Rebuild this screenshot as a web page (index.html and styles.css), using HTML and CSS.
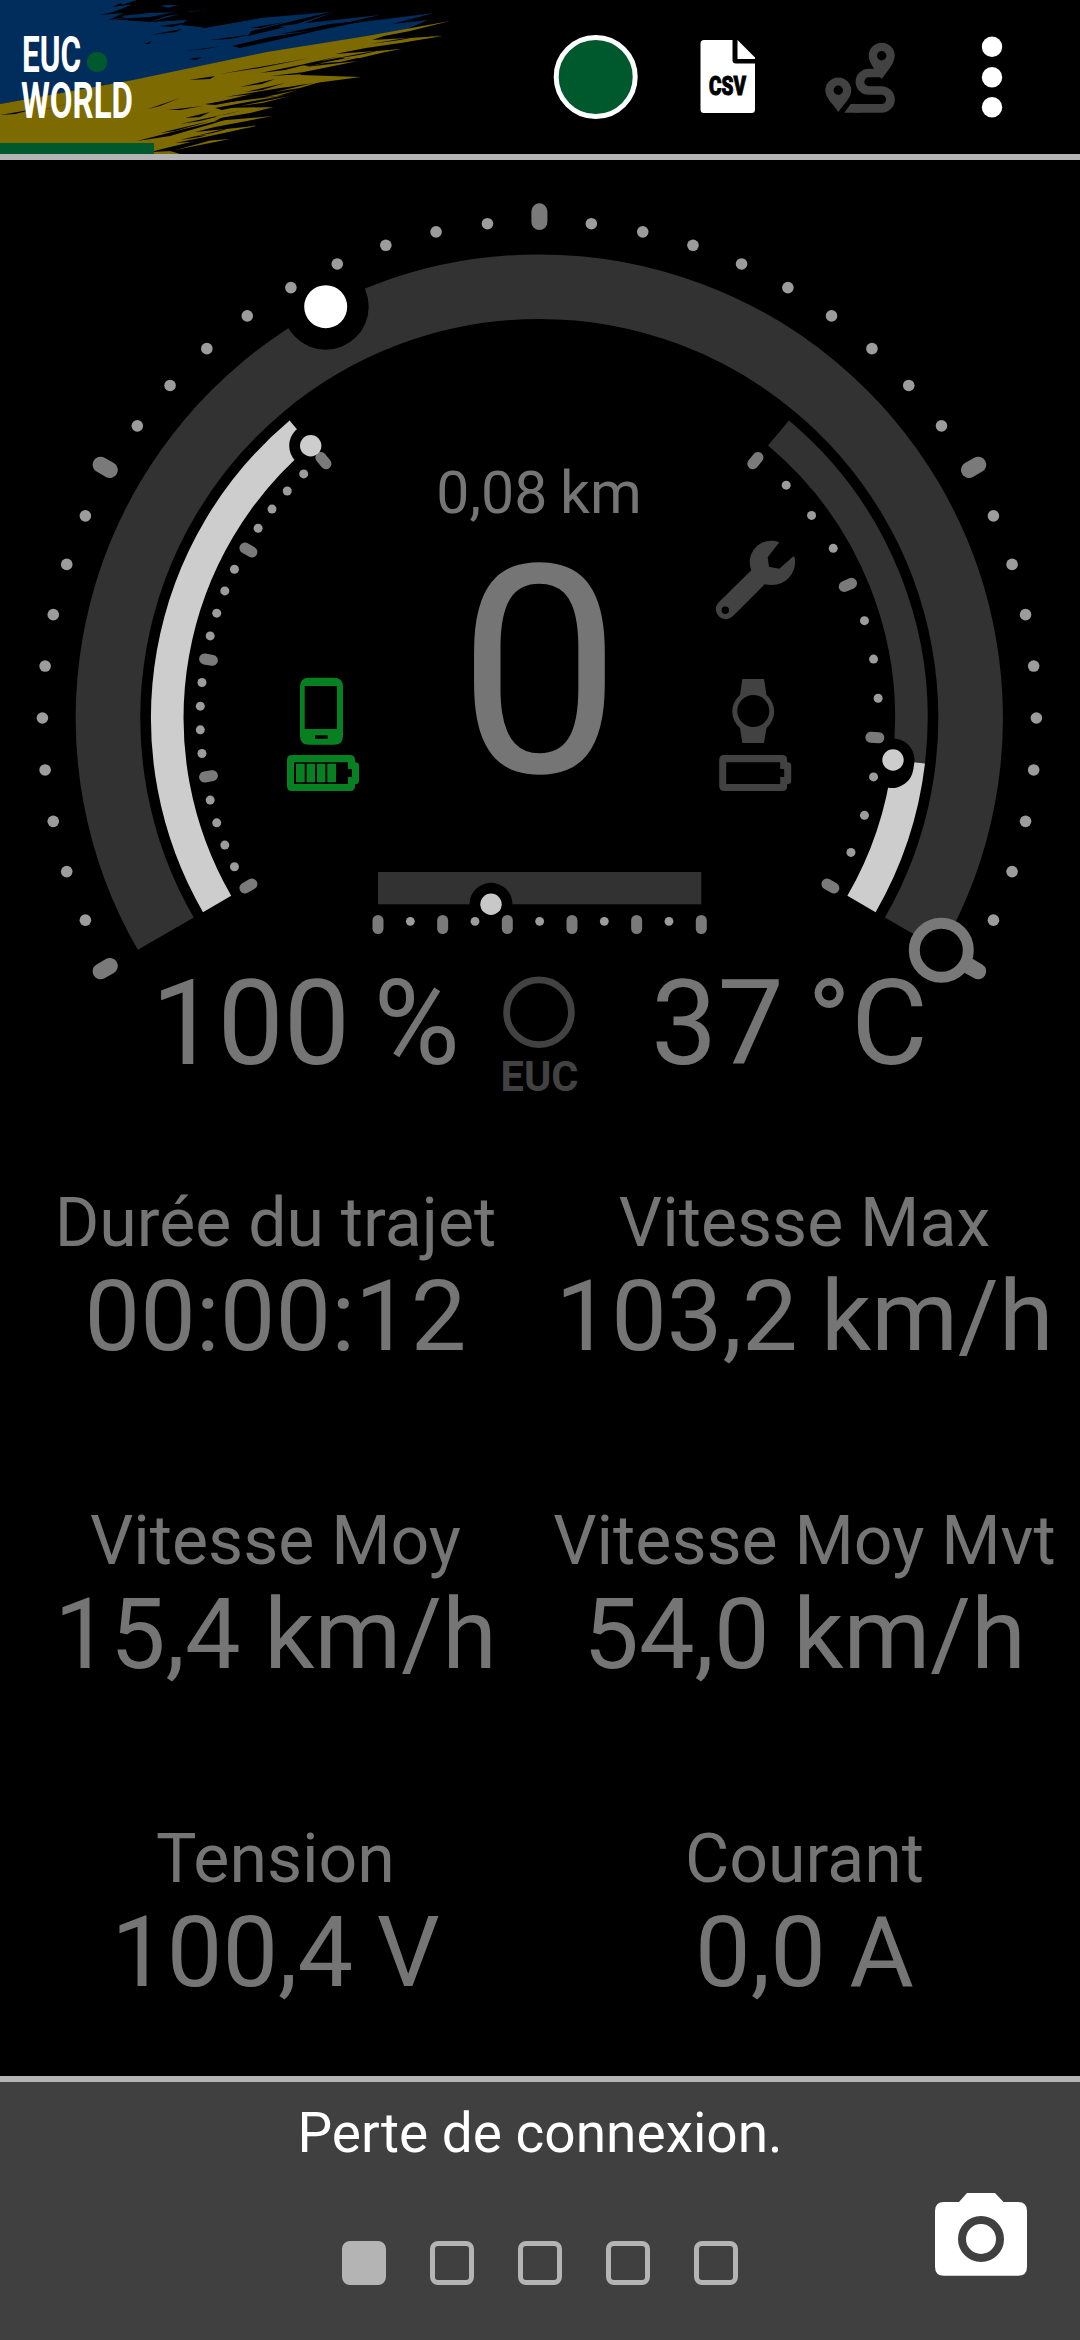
FILE: index.html
```html
<!DOCTYPE html>
<html lang="fr">
<head>
  <meta charset="UTF-8">
  <title>EUC World</title>
  <link rel="stylesheet" href="styles.css">
</head>
<body>
<div class="app">
  <header class="topbar">
    <svg class="brand" width="480" height="154" viewBox="0 0 480 154">
      <!-- blue brush -->
      <path class="blue" d="M0 0H128L112 7L134 4L113 12L100 15L124 13L108 20L150 13L131 21L180 14L150 22L187 20L181 25L212 28L245 22L238 28L262 23L252 30L248 36L290 26L334 12L300 25L345 20L290 31L434 13L392 24L428 20L398 33L0 104Z"/>
      <path class="blue" d="M120 0H137L122 5ZM160 6L200 0L236 4L190 12ZM120 16L190 9L140 20ZM190 30L260 18L330 12L240 34ZM280 26L380 15L300 33Z"/>
      <path class="dark" d="M120 5L175 0H260L225 7L186 12L150 13L178 5ZM183 24L215 17L290 7L320 6L250 20L205 28ZM232 46L270 37L330 28L290 37L240 48ZM110 19L150 17L180 11L150 22ZM150 35L182 29L176 32ZM188 59L202 57L196 60ZM185 51L222 46L205 49ZM144 44L152 41L149 44ZM160 26L190 22L172 27ZM210 40L255 34L230 39ZM250 28L285 22L260 28ZM280 34L330 24L370 20L320 30Z"/>
      <!-- yellow brush -->
      <path class="yellow" d="M0 104L133 80L267 52L367 36L450 21L410 31L384 36L372 40L443 36L400 43L366 48L335 54L402 49L366 55L305 67L358 61L304 72L300 75L361 77L300 85L275 90L252 94L205 105L285 95L240 104L225 108L273 107L225 116L215 121L273 116L215 127L195 132L257 126L205 137L175 143L230 139L190 147L170 151L180 154H0Z"/>
      <path class="dark" d="M189 80L215 76L210 79ZM220 74L310 58L340 52L260 68ZM205 104L245 98L300 86L270 95L215 105ZM300 65L385 49L360 55L310 66ZM137 141L180 130L225 119L262 108L215 123L170 136ZM150 152L215 136L250 127L205 142L172 151ZM240 87L275 79L262 84ZM0 115L35 109L15 114ZM148 109L180 98L160 106ZM168 110L203 106L180 110ZM260 73L300 65L340 56L285 70ZM225 97L290 90L320 83L280 88ZM325 50L400 40L430 34L370 44ZM185 118L210 112L200 117ZM35 112L75 102L50 108ZM215 108L265 99L245 105L222 110ZM270 76L340 68L305 74ZM180 124L240 111L200 121ZM160 133L210 121L175 131ZM180 140L240 125L200 137ZM245 92L285 83L262 90Z"/>
      <path class="yellow" d="M215 116L274 107L250 113L220 118ZM275 92L330 79L300 88ZM340 58L398 49L360 58ZM240 106L290 96L262 103ZM380 44L442 35L400 43ZM190 137L258 125L215 134ZM265 97L298 90L277 96ZM320 63L375 54L340 62Z"/>
      <rect class="green" y="143" width="154" height="11"/>
      <text class="logo" x="22" y="71.500" textLength="59" lengthAdjust="spacingAndGlyphs">EUC</text>
      <text class="logo" x="21" y="118" textLength="112" lengthAdjust="spacingAndGlyphs">WORLD</text>
      <circle class="green" cx="97" cy="62" r="10.200"/>
    </svg>
    <svg class="actions" width="560" height="154" viewBox="520 0 560 154">
      <circle class="green rec" cx="595.700" cy="77" r="39.500"/>
      <path fill="#fff" d="M704 40H732.500V60Q732.500 63.500 736 63.500H755V109.500Q755 113 751.500 113H704Q700.500 113 700.500 109.500V43.500Q700.500 40 704 40ZM737.500 40L755 57.500V59H737.500Z"/>
      <text class="csv" x="709" y="94.500" textLength="37" lengthAdjust="spacingAndGlyphs">CSV</text>
      <path class="pin" fill-rule="evenodd" d="M881.700 79C876 71 868.700 63 868.700 55.700A13 13 0 0 1 894.700 55.700C894.700 63 887.500 71 881.700 79ZM881.700 51A4.700 4.700 0 1 0 881.700 60.400A4.700 4.700 0 1 0 881.700 51ZM838.300 112C833 104 825.300 97.500 825.300 90.500A13 13 0 0 1 851.300 90.500C851.300 97.500 844 104 838.300 112ZM838.300 85.600A4.700 4.700 0 1 0 838.300 95A4.700 4.700 0 1 0 838.300 85.600ZM850.700 104H860V112.700H844.300Z"/>
      <path class="road" d="M881 73H868.700a8.750 8.750 0 0 0 0 17.500H881.500a8.950 8.950 0 0 1 0 17.900H855"/>
      <g fill="#fff">
        <circle cx="992" cy="46.700" r="10.200"/>
        <circle cx="992" cy="77.300" r="10.200"/>
        <circle cx="992" cy="107.300" r="10.200"/>
      </g>
    </svg>
  </header>

  <svg class="gauge" width="1080" height="1000" viewBox="0 160 1080 1000">
    <!-- tracks -->
    <path class="track" stroke-width="64.600" d="M165.800 933.700A431.300 431.300 0 1 1 912.800 933.700"/>
    <path class="value" d="M217.100 904A372.100 372.100 0 0 1 300.100 433"/>
    <path class="track" stroke-width="32.600" d="M778.500 433A372.100 372.100 0 0 1 908.800 761.600"/>
    <path class="value" d="M908.800 761.600A372.100 372.100 0 0 1 861.500 904"/>
    <rect x="378" y="872" width="323.300" height="32.300" fill="#323232"/>

    <!-- gaps around the markers -->
    <circle cx="325.700" cy="306.700" r="43"/>
    <circle cx="310.700" cy="445.700" r="21.500"/>
    <path class="cut" d="M893 760L892 766.500"/>
    <circle cx="491" cy="904.300" r="21.500"/>

    <g id="ticks"></g>

    <!-- markers: speed, max speed, battery, temperature, load -->
    <circle cx="325.700" cy="306.700" r="21.500" fill="#fff"/>
    <circle class="ring" cx="941.300" cy="950.300" r="27"/>
    <circle cx="310.700" cy="445.700" r="10.700" fill="#cdcdcd"/>
    <circle cx="893" cy="760" r="10.700" fill="#cdcdcd"/>
    <circle cx="491" cy="904.300" r="10.700" fill="#c8c8c8"/>

    <text class="dist" x="539" y="512.700">0,08 km</text>
    <text class="speed" x="539.500" y="772">0</text>
    <text class="big" x="305.500" y="1064">100 %</text>
    <text class="big" x="789.500" y="1064">37 °C</text>

    <!-- phone -->
    <g fill="#078022">
      <path fill-rule="evenodd" d="M309 677.700H334Q343 677.700 343 686.700V735.700Q343 744.700 334 744.700H309Q300 744.700 300 735.700V686.700Q300 677.700 309 677.700ZM304.700 686V729H337V686ZM315 735.300V738.700H327.700V735.300Z"/>
      <path id="batt" fill-rule="evenodd" d="M292 755H350Q355 755 355 760V762.300H356Q359 762.300 359 766V780.500Q359 784 356 784H355V786Q355 791 350 791H292Q287 791 287 786V760Q287 755 292 755ZM294 762.300V784H348V777H352V769H348V762.300Z"/>
      <path d="M296 763.800h8.700v18.400h-8.700zM306.700 763.800h8.300v18.400h-8.300zM317 763.800h8.300v18.400h-8.300zM327.300 763.800h8.700v18.400h-8.700z"/>
    </g>

    <!-- watch and tools -->
    <g fill="#424242">
      <path d="M742.300 679H764L766.500 695A21.500 21.500 0 0 1 766.500 728L764 743H742.300L740 728A21.500 21.500 0 0 1 740 695Z"/>
      <circle cx="753.300" cy="711" r="16" fill="#000"/>
      <use href="#batt" x="432.200"/>
      <path d="M779.300 542.300C776.500 540.900 773.500 540.700 771.700 540.700A21.500 21.500 0 0 0 751.300 570.300L718.500 602.500A9.700 9.700 0 1 0 733 616L764.700 584.300Q768 585 771.700 585A23 23 0 0 0 795 560Q795 555 792.300 557.300L779.300 568.700L769 566.700L767.700 557.300Z"/>
      <circle cx="725.300" cy="610.300" r="3.700" fill="#000"/>
    </g>

    <circle class="wheel" cx="539" cy="1012.300" r="32.400"/>
    <text class="euc" x="500.500" y="1090.500" textLength="78" lengthAdjust="spacingAndGlyphs">EUC</text>
  </svg>

  <main class="stats">
    <div class="stat">
      <div class="label">Durée du trajet</div>
      <div class="num">00:00:12</div>
    </div>
    <div class="stat">
      <div class="label">Vitesse Max</div>
      <div class="num">103,2 km/h</div>
    </div>
    <div class="stat">
      <div class="label">Vitesse Moy</div>
      <div class="num">15,4 km/h</div>
    </div>
    <div class="stat">
      <div class="label">Vitesse Moy Mvt</div>
      <div class="num">54,0 km/h</div>
    </div>
    <div class="stat">
      <div class="label">Tension</div>
      <div class="num">100,4 V</div>
    </div>
    <div class="stat">
      <div class="label">Courant</div>
      <div class="num">0,0 A</div>
    </div>
  </main>

  <footer class="bottom">
    <div class="message">Perte de connexion.</div>
    <div class="controls">
      <div class="pages">
        <span class="page active"></span>
        <span class="page"></span>
        <span class="page"></span>
        <span class="page"></span>
        <span class="page"></span>
      </div>
      <svg class="camera" width="92" height="83" viewBox="0 0 92 83">
        <path d="M32 0H60L68.500 9H83Q92 9 92 18V73.700Q92 82.700 83 82.700H9Q0 82.700 0 73.700V18Q0 9 9 9H24Z"/>
        <circle cx="46" cy="46" r="19"/>
      </svg>
    </div>
  </footer>
</div>
<script>
const CX = 539.4, CY = 718;

function polar(r, deg) {
  const a = deg * Math.PI / 180;
  return [(CX + r * Math.sin(a)).toFixed(2), (CY - r * Math.cos(a)).toFixed(2)];
}

// a major tick every `every` steps, a dot for the others
function scale(from, step, count, every, dotR, size, r1, r2, cls) {
  let out = '';
  for (let i = 0; i <= count; i++) {
    const deg = from + i * step;
    if (i % every === 0) {
      const [x1, y1] = polar(r1, deg), [x2, y2] = polar(r2, deg);
      out += `<path class="major ${cls}" d="M${x1} ${y1}L${x2} ${y2}"/>`;
    } else {
      const [x, y] = polar(dotR, deg);
      out += `<circle class="dot" cx="${x}" cy="${y}" r="${size}"/>`;
    }
  }
  return out;
}

let ticks =
  scale(-120, 6, 40, 10, 497, 5.8, 496, 506.7, '') +
  scale(-120, 4, 20, 5, 339.3, 4.5, 332, 340, 'thin') +
  scale(40, 80 / 12, 12, 4, 339.3, 4.5, 332, 340, 'thin');

for (let i = 0; i <= 10; i++) {
  const x = (378 + i * 32.33).toFixed(2);
  ticks += i % 2 ? `<circle class="dot" cx="${x}" cy="921.3" r="4.4"/>`
    : `<path class="major thin" d="M${x} 920.5V928.5"/>`;
}
document.getElementById('ticks').innerHTML = ticks;
</script>
</body>
</html>
```
FILE: styles.css
```css
* { box-sizing: border-box; }
body { margin: 0; background: #000; font-family: Roboto, "Liberation Sans", sans-serif; }
.app { width: 1080px; height: 2340px; display: flex; flex-direction: column; overflow: hidden; }
svg { display: block; flex: none; }

.topbar { display: flex; justify-content: space-between; height: 160px; border-bottom: 6px solid #b4b4b4; flex: none; }
.blue { fill: #002d5c; }
.yellow { fill: #7d6a00; }
.dark { fill: #000; }
.green { fill: #00592d; }
.rec { stroke: #fff; stroke-width: 5px; }
.logo { fill: #fff; font-size: 50.500px; font-weight: 700; }
.csv { fill: #000; stroke: #000; stroke-width: 1px; font-size: 26px; font-weight: 900; }
.pin { fill: #424242; }
.road { fill: none; stroke: #424242; stroke-width: 8.700px; }

.track { fill: none; stroke: #323232; }
.value { fill: none; stroke: #cdcdcd; stroke-width: 32.600px; }
.cut { stroke: #000; stroke-width: 43px; stroke-linecap: round; }
.dot { fill: #9c9c9c; }
.major { stroke: #7a7a7a; stroke-width: 16px; stroke-linecap: round; }
.thin { stroke-width: 11px; }
.ring { fill: #000; stroke: #787878; stroke-width: 11px; }
.wheel { fill: none; stroke: #424242; stroke-width: 6.700px; }
.gauge text { fill: #757575; text-anchor: middle; }
.gauge .dist { font-size: 59px; word-spacing: -2px; }
.gauge .speed { font-size: 291px; }
.gauge .big { font-size: 118px; word-spacing: -6px; }
.gauge .euc { fill: #424242; font-size: 43px; font-weight: 700; text-anchor: start; }

.stats { display: grid; grid-template-columns: 529px 529px; grid-auto-rows: 318px; justify-content: center; height: 916px; flex: none; color: #757575; text-align: center; white-space: nowrap; padding-top: 24px; }
.label { font-size: 68px; line-height: 78px; }
.num { font-size: 99px; line-height: 116px; margin-top: -4px; word-spacing: -1px; }

.bottom { height: 264px; border-top: 6px solid #b4b4b4; background: #404040; flex: none; }
.message { color: #fff; font-size: 55px; line-height: 64px; text-align: center; padding-top: 19px; }
.controls { display: grid; grid-template-columns: 1fr auto 1fr; align-items: start; padding-top: 28px; }
.pages { grid-column: 2; display: flex; gap: 44px; padding-top: 48px; }
.page { width: 44px; height: 44px; border: 5px solid #b4b4b4; border-radius: 8px; }
.active { background: #b4b4b4; }
.camera { justify-self: end; margin-right: 53px; }
.camera path { fill: #fff; }
.camera circle { fill: #fff; stroke: #404040; stroke-width: 8px; }
```
